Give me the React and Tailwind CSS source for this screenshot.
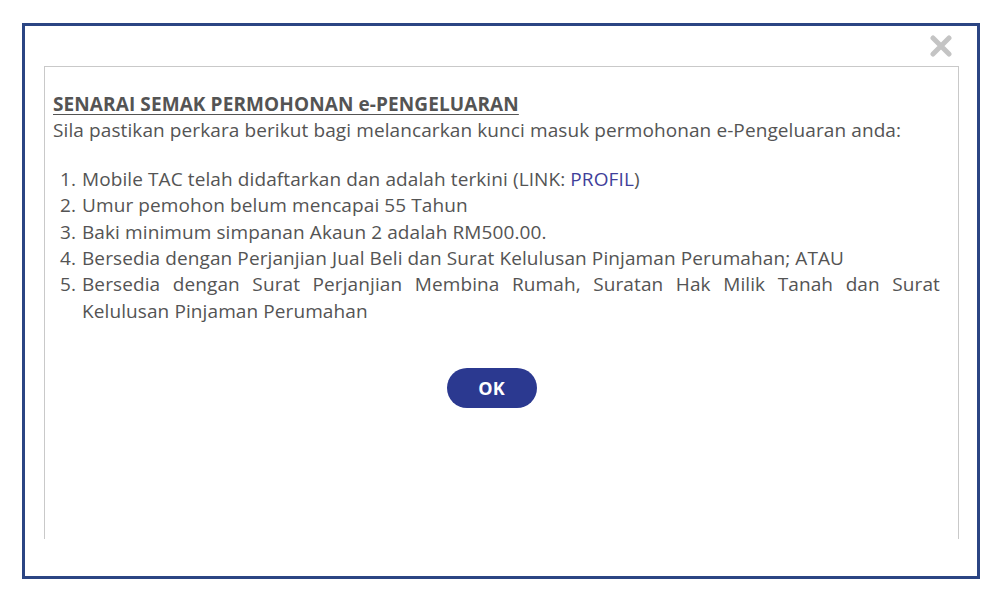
export default function App() {
  const items = [
    <>Mobile TAC telah didaftarkan dan adalah terkini (LINK: <a className="text-[#3f3f9a]">PROFIL</a>)</>,
    <>Umur pemohon belum mencapai 55 Tahun</>,
    <>Baki minimum simpanan Akaun 2 adalah RM500.00.</>,
    <>Bersedia dengan Perjanjian Jual Beli dan Surat Kelulusan Pinjaman Perumahan; ATAU</>,
    <>Bersedia dengan Surat Perjanjian Membina Rumah, Suratan Hak Milik Tanah dan Surat Kelulusan Pinjaman Perumahan</>,
  ]

  return (
    <div className="w-[1000px] h-[602px] bg-white pt-[23px] pl-[22px]" style={{ fontFamily: '"Open Sans", Lato, sans-serif' }}>
      <div className="w-[958px] h-[556px] border-[3px] border-[#2b4583] flex flex-col">
        {/* close */}
        <div className="flex justify-end pt-[9px] pr-[25px] h-[40px]">
          <svg width="22" height="22" viewBox="0 0 22 22">
            <path d="M3 3 L19 19 M19 3 L3 19" stroke="#c4c4c4" strokeWidth="5" strokeLinecap="round" />
          </svg>
        </div>

        <div className="flex-1 ml-[19px] mr-[18px] mb-[37px] border border-b-0 border-[#c9c9c9] pl-[8px] pr-[18px] pt-[24px] text-[#545454] text-[19px] leading-[26.4px] tracking-[0.1px]">
          <h2 className="font-bold underline underline-offset-[3px]">SENARAI SEMAK PERMOHONAN e-PENGELUARAN</h2>
          <p>Sila pastikan perkara berikut bagi melancarkan kunci masuk permohonan e-Pengeluaran anda:</p>

          <ol className="mt-[22px] pl-[7px]">
            {items.map((it, i) => (
              <li key={i} className="flex">
                <span className="w-[22px] shrink-0">{i + 1}.</span>
                <span className="flex-1 text-justify">{it}</span>
              </li>
            ))}
          </ol>

          <div className="flex justify-center mt-[44px] pr-[10px]">
            <button className="w-[90px] h-[40px] rounded-full bg-[#2b3990] text-white font-bold text-[18px] tracking-normal">OK</button>
          </div>
        </div>
      </div>
    </div>
  )
}
